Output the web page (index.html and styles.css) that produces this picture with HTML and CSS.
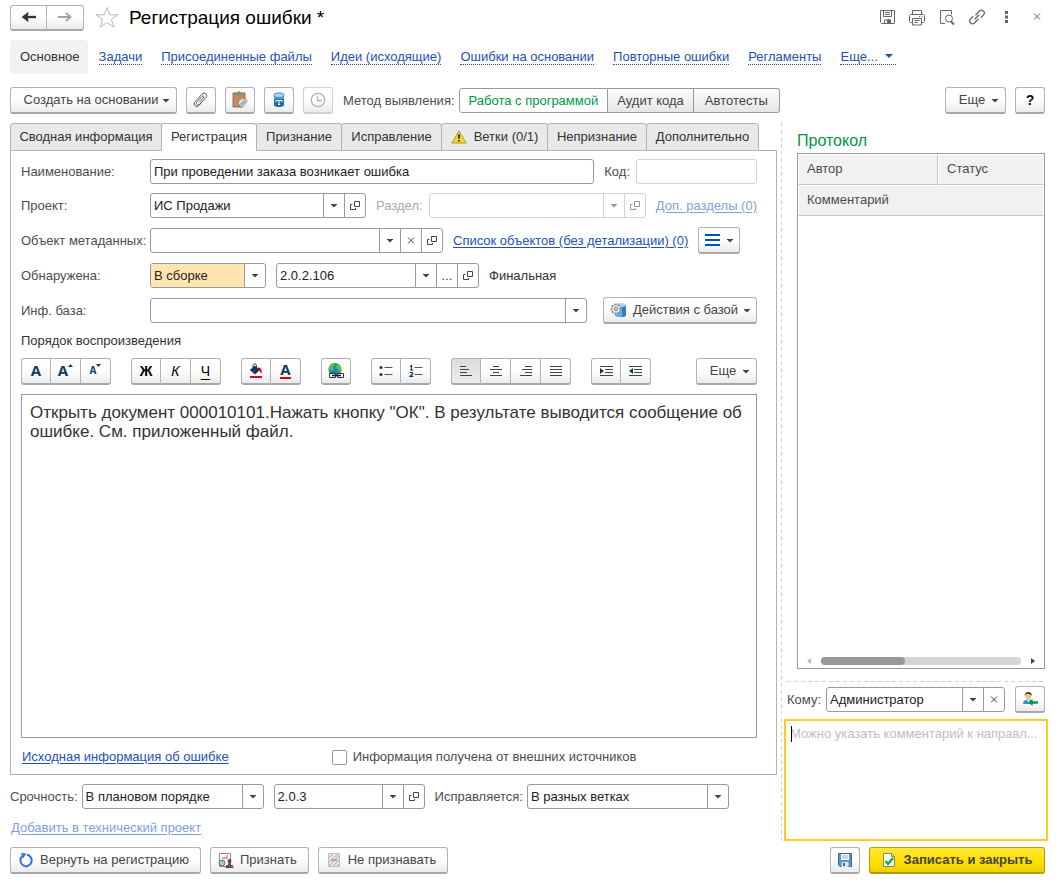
FILE: index.html
```html
<!DOCTYPE html>
<html lang="ru">
<head>
<meta charset="utf-8">
<meta name="viewport" content="width=device-width, initial-scale=1">
<title>Регистрация ошибки *</title>
<link rel="stylesheet" href="styles.css">
</head>
<body>
<svg class="sprite" aria-hidden="true">
  <symbol id="i-open" viewBox="0 0 10 11"><path d="M4.500 1.500h5v5h-5zM2.500 4.500h-2v5h5v-1.500" fill="none" stroke="currentColor"/></symbol>
  <symbol id="i-down" viewBox="0 0 6 5"><path d="M0 1h6v.6L3 4.400 0 1.600z" fill="currentColor"/></symbol>
  <symbol id="i-x" viewBox="0 0 8 9"><path d="M1 1.500l6 6M7 1.500l-6 6" fill="none" stroke="currentColor"/></symbol>
  <symbol id="i-clip" viewBox="0 0 18 18"><path d="M5 8.500l5-5.300c1.500-1.500 3-1.300 4-.4 1 1 1 2.500-.2 3.900l-6 6.500c-1 1-2.200.9-2.900.3-.7-.7-.7-1.700.1-2.700l5-5.300c.6-.6 1.200-.5 1.600-.2.400.4.300.9-.1 1.500L7.300 11.200M5 8.500L3.200 10.500c-1.500 1.700-1.100 3.400-.1 4.300 1 .9 2.700.9 4-.5L9 12.300" fill="none" stroke="currentColor"/></symbol>
</svg>

<div class="window">
  <header class="titlebar">
    <div class="group history">
      <button class="btn" type="button" aria-label="Назад"><svg width="16" height="12" viewBox="0 0 16 12"><path d="M15 6H4" stroke="#333" stroke-width="2.400"/><path d="M1 6l6-4.600v2.600L5 6l2 2v2.600z" fill="#333" stroke="#333" stroke-width=".6"/></svg></button>
      <button class="btn" type="button" aria-label="Вперед"><svg width="16" height="12" viewBox="0 0 16 12"><path d="M1 6h12M9 2l4.500 4L9 10" fill="none" stroke="#a3a3a3" stroke-width="1.800"/></svg></button>
    </div>
    <svg class="star" width="24" height="23" viewBox="0 0 24 23"><path d="M12 1.500l2.800 7.300h8l-6.400 4.700 2.500 7.700L12 16.500l-6.900 4.700 2.500-7.700L1.200 8.800h8z" fill="#fff" stroke="#b5bac2"/></svg>
    <h1>Регистрация ошибки *</h1>
    <div class="tools">
      <button type="button" aria-label="Сохранить"><svg width="18" height="18" viewBox="0 0 18 18" fill="none" stroke="#666"><path d="M2.500 1.500h14v13h-13l-1-1z"/><path d="M5.500 1.500v6h8v-6M7 3.500h5M7 5.500h5"/><path d="M6.500 14v-3h6v3"/><path d="M9.500 11h3v3h-3z" fill="#666"/></svg></button>
      <button type="button" aria-label="Печать"><svg width="18" height="18" viewBox="0 0 18 18" fill="none" stroke="#666"><path d="M4.500 5.500v-4h9v4M4.500 13.500h-2l-1-1v-6l1-1h13l1 1v6l-1 1h-2"/><path d="M4.500 9.500h9v6.500h-9zM6.500 11.500h5M6.500 13.500h3M11 7.500h1M13.500 7.500h1"/></svg></button>
      <button type="button" aria-label="Предпросмотр"><svg width="18" height="18" viewBox="0 0 18 18" fill="none" stroke="#666"><path d="M7 14.500H2.500v-13h11v4"/><circle cx="11" cy="9.500" r="3.500"/><path d="M13 12.500l3 3" stroke-width="2"/></svg></button>
      <button type="button" aria-label="Ссылка"><svg width="18" height="18" viewBox="0 0 18 18" fill="none" stroke="#666" stroke-width="1.300"><path d="M7.500 6.200l3.700-4c1.300-1.300 3-1.300 4.200-.3 1.200 1.100 1.200 2.800 0 4.200l-2.600 2.700M10.500 9.800l-3.700 4c-1.300 1.300-3 1.300-4.200.3-1.200-1.100-1.200-2.800 0-4.200l2.600-2.700M6.800 10.200l4.400-4.600"/></svg></button>
      <button type="button" aria-label="Меню"><svg width="18" height="18" viewBox="0 0 18 18" fill="#666"><path d="M7 2h3v3H7zM7 6.500h3v3H7zM7 11h3v3H7z"/></svg></button>
      <button type="button" aria-label="Закрыть"><svg width="18" height="18" viewBox="0 0 18 18" stroke="#666"><path d="M6 4.500l6 6M12 4.500l-6 6"/></svg></button>
    </div>
  </header>

  <nav class="sections">
    <a class="current" href="#main"><span>Основное</span></a>
    <a href="#tasks"><span>Задачи</span></a>
    <a href="#files"><span>Присоединенные файлы</span></a>
    <a href="#ideas"><span>Идеи (исходящие)</span></a>
    <a href="#based"><span>Ошибки на основании</span></a>
    <a href="#repeat"><span>Повторные ошибки</span></a>
    <a href="#rules"><span>Регламенты</span></a>
    <a href="#more"><span>Еще...<svg class="nav-arrow" width="8" height="4" viewBox="0 0 8 4"><path d="M0 0h8L4 4z" fill="#1e50b5"/></svg></span></a>
  </nav>

  <div class="commands">
    <button class="btn create" type="button">Создать на основании<svg class="arr"><use href="#i-down"/></svg></button>
    <button class="btn square" type="button" aria-label="Файлы"><svg width="18" height="18" color="#555"><use href="#i-clip"/></svg></button>
    <button class="btn square" type="button" aria-label="Вставить файл"><svg width="18" height="18" viewBox="0 0 18 18"><path d="M2 2h12v14H2z" fill="#c08a63" stroke="#a06c48"/><path d="M4 1.500h2.500l.8-1.200h1.500l.8 1.200H12v2.800H4z" fill="#8b8b83"/><circle cx="12.500" cy="12.500" r="4.500" fill="#eee"/><svg x="7" y="7" width="11" height="11" color="#555"><use href="#i-clip"/></svg></svg></button>
    <button class="btn square" type="button" aria-label="База"><svg width="14" height="16" viewBox="0 0 14 16"><path d="M2 3v10c0 2.500 10 2.500 10 0V3z" fill="#4c9ddd"/><path d="M2 7v6c0 2.500 10 2.500 10 0V7z" fill="#216ca9"/><ellipse cx="7" cy="3.200" rx="5" ry="2.200" fill="#a9d4f3" stroke="#3f88c2"/><path d="M4 10V8.500h6V10M7 8.500v4M6 12.500h2" fill="none" stroke="#fff"/></svg></button>
    <button class="btn square faded" type="button" aria-label="История" disabled><svg width="16" height="16" viewBox="0 0 16 16" fill="none" stroke="#b5b5b5"><circle cx="8" cy="8" r="6.700" stroke-width="1.300"/><path d="M7.500 3.500v5H12" stroke-width="1.400"/></svg></button>
    <span class="caption">Метод выявления:</span>
    <div class="switch" role="group" aria-label="Метод выявления">
      <button class="on" type="button">Работа с программой</button>
      <button type="button">Аудит кода</button>
      <button type="button">Автотесты</button>
    </div>
    <div class="right">
      <button class="btn more" type="button">Еще<svg class="arr"><use href="#i-down"/></svg></button>
      <button class="btn square help" type="button">?</button>
    </div>
  </div>

  <main class="content">
    <section class="left">
      <div class="tabs" role="tablist">
        <button class="t-summary" type="button" role="tab">Сводная информация</button>
        <button class="t-reg active" type="button" role="tab" aria-selected="true">Регистрация</button>
        <button class="t-accept" type="button" role="tab">Признание</button>
        <button class="t-fix" type="button" role="tab">Исправление</button>
        <button class="t-branch" type="button" role="tab"><svg width="16" height="14" viewBox="0 0 16 14"><path d="M8 1L15.200 13H.8z" fill="#f1d732" stroke="#b09a2a" stroke-linejoin="round"/><path d="M7 4.500h2L8.600 9H7.400zM7.200 10h1.600v1.600H7.200z" fill="#222"/></svg>Ветки (0/1)</button>
        <button class="t-reject" type="button" role="tab">Непризнание</button>
        <button class="t-extra" type="button" role="tab">Дополнительно</button>
      </div>

      <div class="panel">
        <div class="row">
          <label class="lead" for="name">Наименование:</label>
          <div class="field grow"><input id="name" value="При проведении заказа возникает ошибка"></div>
          <label for="code">Код:</label>
          <div class="field muted code"><input id="code" disabled></div>
        </div>
        <div class="row">
          <label class="lead" for="project">Проект:</label>
          <div class="field w-project"><input id="project" value="ИС Продажи"><button type="button" aria-label="Выбрать"><svg class="arr"><use href="#i-down"/></svg></button><button type="button" aria-label="Открыть"><svg class="open"><use href="#i-open"/></svg></button></div>
          <label class="pale" for="part">Раздел:</label>
          <div class="field muted grow part"><input id="part" disabled><button type="button" aria-label="Выбрать" disabled><svg class="arr"><use href="#i-down"/></svg></button><button type="button" aria-label="Открыть" disabled><svg class="open"><use href="#i-open"/></svg></button></div>
          <a class="link pale-link" href="#parts">Доп. разделы (0)</a>
        </div>
        <div class="row">
          <label class="lead" for="object">Объект метаданных:</label>
          <div class="field w-object"><input id="object"><button type="button" aria-label="Выбрать"><svg class="arr"><use href="#i-down"/></svg></button><button type="button" aria-label="Очистить"><svg class="x"><use href="#i-x"/></svg></button><button type="button" aria-label="Открыть"><svg class="open"><use href="#i-open"/></svg></button></div>
          <a class="link" href="#objects">Список объектов (без детализации) (0)</a>
          <button class="btn list" type="button" aria-label="Список"><svg width="15" height="12" viewBox="0 0 15 12"><path d="M0 1h15M0 6h15M0 11h15" stroke="#0052b4" stroke-width="2"/></svg><svg class="arr"><use href="#i-down"/></svg></button>
        </div>
        <div class="row">
          <label class="lead" for="found">Обнаружена:</label>
          <div class="field warm w-found"><select id="found"><option>В сборке</option></select><span class="cell"><svg class="arr"><use href="#i-down"/></svg></span></div>
          <div class="field w-build"><input aria-label="Номер сборки" value="2.0.2.106"><button type="button" aria-label="Выбрать"><svg class="arr"><use href="#i-down"/></svg></button><button type="button">...</button><button type="button" aria-label="Открыть"><svg class="open"><use href="#i-open"/></svg></button></div>
          <span class="value">Финальная</span>
        </div>
        <div class="row base">
          <label class="lead" for="base">Инф. база:</label>
          <div class="field grow"><input id="base"><button type="button" aria-label="Выбрать"><svg class="arr"><use href="#i-down"/></svg></button></div>
          <button class="btn base-actions" type="button"><svg width="17" height="17" viewBox="0 0 17 17"><path d="M5 3v10c0 3 11 3 11 0V3z" fill="#5fb0e4"/><path d="M12 3h4v10c0 1-2 2-4 2z" fill="#2f7fbd"/><ellipse cx="10.500" cy="3" rx="5.500" ry="2" fill="#a8d8f3"/><circle cx="6" cy="7" r="4.500" fill="#d5d8da" stroke="#888" stroke-dasharray="2 1.200" stroke-width="1.800"/><circle cx="6" cy="7" r="3.600" fill="#dfe2e4"/><circle cx="6" cy="7" r="1.500" fill="#fff" stroke="#777"/></svg>Действия с базой<svg class="arr"><use href="#i-down"/></svg></button>
        </div>

        <label class="value" for="steps">Порядок воспроизведения</label>

        <div class="format">
          <div class="group">
            <button class="btn letter" type="button">A</button>
            <button class="btn letter" type="button" aria-label="Крупнее"><span>A</span><svg class="raise" width="5" height="3" viewBox="0 0 5 3"><path d="M0 3h5L2.500 0z" fill="#113b5c"/></svg></button>
            <button class="btn letter tiny" type="button" aria-label="Мельче"><span>A</span><svg class="raise" width="5" height="3" viewBox="0 0 5 3"><path d="M0 0h5L2.500 3z" fill="#113b5c"/></svg></button>
          </div>
          <div class="group">
            <button class="btn glyph bold" type="button">Ж</button>
            <button class="btn glyph italic" type="button">К</button>
            <button class="btn glyph under" type="button">Ч</button>
          </div>
          <div class="group">
            <button class="btn" type="button" aria-label="Цвет фона"><svg width="14" height="16" viewBox="0 0 14 16"><path d="M6 2.500l5 4.500-5 4.500L.8 7z" fill="#113b5c"/><path d="M4 6V2.500C4 .5 7.500.5 7.500 2.500V5" fill="none" stroke="#113b5c"/><path d="M9 4.500c3-.2 4.200 2 3.500 6-2-1-1-3-3.500-4.500z" fill="#d9001b"/><path d="M1 13h12v2H1z" fill="#d9001b"/></svg></button>
            <button class="btn letter" type="button" aria-label="Цвет текста"><span class="ink">A</span></button>
          </div>
          <div class="group">
            <button class="btn" type="button" aria-label="Гиперссылка"><svg width="18" height="18" viewBox="0 0 18 18"><circle cx="8" cy="7.500" r="6.500" fill="#1682cc"/><path d="M3 3c3-3 6-2 5 0L6 5l1 2-2 2-2-1-1.500-1zM10 2l4 3 .5 4-3 1-1-3-2-1z" fill="#56c43c"/><path d="M2.500 11.500h6v4h-6zM10.500 11.500h6v4h-6z" fill="#fff" stroke="#333"/><path d="M5 13.500h9" stroke="#222" stroke-width="1.600"/></svg></button>
          </div>
          <div class="group">
            <button class="btn" type="button" aria-label="Маркированный список"><svg width="14" height="12" viewBox="0 0 14 12"><circle cx="2" cy="2.500" r="1.600" fill="#113b5c"/><circle cx="2" cy="9.500" r="1.600" fill="#113b5c"/><path d="M5.500 2.500h8M5.500 9.500h8" stroke="#555"/></svg></button>
            <button class="btn" type="button" aria-label="Нумерованный список"><svg width="14" height="12" viewBox="0 0 14 12"><path d="M1 1.500l1.500-1V5M.8 5h3.400M1 7.500h2.500v1.500L1 11.300h3.200" fill="none" stroke="#113b5c" stroke-width="1.200"/><path d="M5.500 2.500h8M5.500 9.500h8" stroke="#555"/></svg></button>
          </div>
          <div class="group">
            <button class="btn pressed" type="button" aria-label="По левому краю"><svg width="12" height="12" viewBox="0 0 12 12"><path d="M0 1.500h6M0 4.500h9M0 7.500h7M0 10.500h12" stroke="#444"/></svg></button>
            <button class="btn" type="button" aria-label="По центру"><svg width="12" height="12" viewBox="0 0 12 12"><path d="M3 1.500h6M0 4.500h12M3 7.500h6M0 10.500h12" stroke="#444"/></svg></button>
            <button class="btn" type="button" aria-label="По правому краю"><svg width="12" height="12" viewBox="0 0 12 12"><path d="M5 1.500h7M2 4.500h10M5 7.500h7M0 10.500h12" stroke="#444"/></svg></button>
            <button class="btn" type="button" aria-label="По ширине"><svg width="12" height="12" viewBox="0 0 12 12"><path d="M0 1.500h12M0 4.500h12M0 7.500h12M0 10.500h12" stroke="#444"/></svg></button>
          </div>
          <div class="group">
            <button class="btn" type="button" aria-label="Увеличить отступ"><svg width="13" height="12" viewBox="0 0 13 12"><path d="M0 1.500h13M5 4.500h8M5 7.500h8M0 10.500h13" stroke="#444"/><path d="M0 3l4 3-4 3z" fill="#113b5c"/></svg></button>
            <button class="btn" type="button" aria-label="Уменьшить отступ"><svg width="13" height="12" viewBox="0 0 13 12"><path d="M0 1.500h13M5 4.500h8M5 7.500h8M0 10.500h13" stroke="#444"/><path d="M4 3L0 6l4 3z" fill="#113b5c"/></svg></button>
          </div>
          <button class="btn more right" type="button">Еще<svg class="arr"><use href="#i-down"/></svg></button>
        </div>

        <textarea id="steps" class="editor">Открыть документ 000010101.Нажать кнопку "ОК". В результате выводится сообщение об ошибке. См. приложенный файл.</textarea>

        <div class="sources">
          <a class="link" href="#source">Исходная информация об ошибке</a>
          <label class="check"><input type="checkbox">Информация получена от внешних источников</label>
        </div>
      </div>

      <div class="row urgency">
        <label for="urgency">Срочность:</label>
        <div class="field w-urgency"><select id="urgency"><option>В плановом порядке</option></select><span class="cell"><svg class="arr"><use href="#i-down"/></svg></span></div>
        <div class="field w-version"><input aria-label="Версия" value="2.0.3"><button type="button" aria-label="Выбрать"><svg class="arr"><use href="#i-down"/></svg></button><button type="button" aria-label="Открыть"><svg class="open"><use href="#i-open"/></svg></button></div>
        <label for="branch">Исправляется:</label>
        <div class="field w-branch"><select id="branch"><option>В разных ветках</option></select><span class="cell"><svg class="arr"><use href="#i-down"/></svg></span></div>
      </div>
      <div class="tech"><a class="link pale-link" href="#tech">Добавить в технический проект</a></div>
    </section>

    <aside class="side">
      <section class="log">
        <h2>Протокол</h2>
        <div class="log-box">
          <table>
            <thead>
              <tr><th class="author" scope="col">Автор</th><th scope="col">Статус</th></tr>
              <tr><th colspan="2" scope="col">Комментарий</th></tr>
            </thead>
          </table>
          <div class="scroll">
            <svg width="4" height="6" viewBox="0 0 4 6"><path d="M4 0v6L0 3z" fill="#bbb"/></svg>
            <div class="track"><div class="thumb"></div></div>
            <svg width="4" height="6" viewBox="0 0 4 6"><path d="M0 0v6l4-3z" fill="#444"/></svg>
          </div>
        </div>
      </section>
      <div class="row whom">
        <label for="whom">Кому:</label>
        <div class="field grow"><input id="whom" value="Администратор"><button type="button" aria-label="Выбрать"><svg class="arr"><use href="#i-down"/></svg></button><button type="button" aria-label="Очистить"><svg class="x"><use href="#i-x"/></svg></button></div>
        <button class="btn square" type="button" aria-label="Направить"><svg width="16" height="16" viewBox="0 0 16 16"><path d="M1 13c0-3 2-4 4-4.500h3.500c2 .5 3 1.500 3 4.500z" fill="#3b92c7"/><path d="M5 8.500l1.500 3L8 8.500z" fill="#fff"/><ellipse cx="6.300" cy="5" rx="3" ry="3.800" fill="#f1c58a"/><path d="M2.800 5C2.200 0 10.300-.5 9.900 5 9 3 7 3 5.500 2.800 4 3 3.500 4 2.800 5z" fill="#4a3422"/><path d="M6.500 11.500l4-3.500v2.200H16v2.600h-5.500V15z" fill="#0a9c4a"/></svg></button>
      </div>
      <div class="note">
        <textarea aria-label="Комментарий" placeholder="Можно указать комментарий к направл..."></textarea>
        <span class="caret"></span>
      </div>
    </aside>
  </main>

  <footer class="actions">
    <button class="btn" type="button"><svg width="16" height="16" viewBox="0 0 16 16"><path d="M4.500 4A5.700 5.700 0 1 0 9 2.800" fill="none" stroke="#2f74d8" stroke-width="2"/><path d="M3 1l5.500.5-3.500 5z" fill="#2f74d8"/></svg>Вернуть на регистрацию</button>
    <button class="btn" type="button"><svg width="16" height="16" viewBox="0 0 16 16"><path d="M1.500 1.500h11v13h-11z" fill="#fff" stroke="#7d8a94"/><path d="M4 6h6M8 4h2" stroke="#e33"/><circle cx="4" cy="11" r="3" fill="#a6c6d6" stroke="#54788c"/><circle cx="11.500" cy="9" r="2" fill="#7b432b"/><path d="M10.500 10h2l.5 3h2v1.500H8V13h2z" fill="#7b432b"/><path d="M7.500 15.300h8" stroke="#222"/></svg>Признать</button>
    <button class="btn" type="button"><svg width="16" height="16" viewBox="0 0 16 16"><path d="M2.500 1.500h11v13h-11z" fill="#f0f2f3" stroke="#b8bec2"/><path d="M3 6l4-4M3 10l9-8M3 14l10-10M7 14l6-6M11 14l2-2" stroke="#b5bbc0" stroke-width="1.300"/><path d="M5 8h6" stroke="#f25555"/></svg>Не признавать</button>
    <div class="right">
      <button class="btn square" type="button" aria-label="Записать"><svg width="14" height="14" viewBox="0 0 14 14"><path d="M.5.500h13v13H2l-1.500-1.500z" fill="#5b93c7" stroke="#3b6791"/><path d="M3 1h8v6H3z" fill="#fff"/><path d="M4 3h6M4 5h6" stroke="#91aabf"/><path d="M3.500 9h7v5h-7z" fill="#dce4e9"/><path d="M5 10h2v3H5z" fill="#3b6791"/></svg></button>
      <button class="btn primary" type="button"><svg width="14" height="16" viewBox="0 0 14 16"><path d="M1.500 1.500h8l3 3v10h-11z" fill="#fff" stroke="#7c8d5c"/><path d="M9.500 1.500v3h3" fill="none" stroke="#7c8d5c"/><path d="M3.500 9l2.500 3 5-6" fill="none" stroke="#25a536" stroke-width="2.400"/></svg>Записать и закрыть</button>
    </div>
  </footer>
</div>
</body>
</html>
```

FILE: styles.css
```css
* { box-sizing: border-box; }

body {
  margin: 0;
  background: #fff;
  color: #4d4d4d;
  font: 13px/16px "Liberation Sans", Arial, sans-serif;
}

button, input, select, textarea {
  margin: 0;
  font: inherit;
  color: inherit;
}

button { cursor: pointer; }
svg { display: block; flex: none; }
.sprite { position: absolute; width: 0; height: 0; }

.window {
  display: flex;
  flex-direction: column;
  min-height: 100vh;
  padding: 4px 19px 9px 10px;
}

.right { display: flex; gap: 9px; margin-left: auto; }
.arr { width: 6px; height: 5px; }
.btn .arr { margin-top: 1px; }
.open { width: 10px; height: 11px; }
.x { width: 8px; height: 9px; }

/* Buttons */
.btn {
  display: flex;
  align-items: center;
  justify-content: center;
  height: 27px;
  padding: 0 12px;
  border: 1px solid #b3b3b3;
  border-bottom: 2px solid #a8a8a8;
  border-radius: 3px;
  background: linear-gradient(#fff 45%, #ebebeb);
  color: #444;
  white-space: nowrap;
}
.btn.square { width: 30px; padding: 0; }
.btn.faded { border-color: #d0d0d0; }
.btn.more { width: 61px; padding: 0 0 0 6px; gap: 7px; }
.btn.help { color: #111; font-size: 14px; font-weight: bold; }
.group { display: flex; }
.group .btn { width: 30px; padding: 0; }
.group .btn + .btn { border-left: 0; }
.group .btn:not(:first-child) { border-top-left-radius: 0; border-bottom-left-radius: 0; }
.group .btn:not(:last-child) { border-top-right-radius: 0; border-bottom-right-radius: 0; }

/* Title bar */
.titlebar { display: flex; align-items: center; height: 27px; }
.history .btn { width: 37px; height: 26px; }
.star { margin: 0 10px 0 11px; }
h1 { margin: 0; color: #000; font-size: 19px; font-weight: normal; line-height: 24px; }
.tools { display: flex; gap: 12px; margin: 0 -1px 0 auto; }
.tools button { padding: 0; border: 0; background: none; }

/* Sections */
.sections { display: flex; gap: 19px; margin-top: 9px; line-height: 34px; white-space: nowrap; }
.sections a { color: #1e50b5; text-decoration: none; }
.sections a span { border-bottom: 1px dotted #1e50b5; }
.sections .current { margin-right: -8px; padding: 0 8px 0 10px; border-radius: 4px; background: #f2f2f2; color: #333; }
.sections .current span { border: 0; }
.nav-arrow { display: inline-block; margin: 0 3px 3px 7px; }

/* Command bar */
.commands { display: flex; align-items: center; gap: 9px; margin-top: 13px; }
.create { width: 167px; padding: 0 0 0 6px; gap: 5px; }
.caption { margin: 0 -5px 0 1px; }
.switch { display: flex; }
.switch button {
  height: 25px;
  padding: 0 9px;
  border: 1px solid #999;
  border-left: 0;
  background: linear-gradient(#fcfcfc, #e6e6e6);
  color: #444;
}
.switch button:first-child { border-left: 1px solid #999; border-radius: 3px 0 0 3px; }
.switch button:last-child { padding: 0 11px; border-radius: 0 3px 3px 0; }
.switch .on { background: #fff; color: #009646; }

/* Columns */
.content { display: grid; grid-template-columns: 1fr 267px; gap: 4px; flex: 1; margin: 9px -3px 0 0; }
.left { display: flex; flex-direction: column; min-width: 0; }

.tabs { display: flex; margin-bottom: -1px; z-index: 1; }
.tabs button {
  display: flex;
  align-items: center;
  justify-content: center;
  gap: 7px;
  height: 28px;
  margin-right: -1px;
  padding: 0;
  border: 1px solid #b3b3b3;
  border-radius: 3px 3px 0 0;
  background: #e9e9e9;
  color: #333;
  white-space: nowrap;
}
.tabs .active { border-bottom-color: #fff; background: #fff; }
.t-summary { width: 152px; }
.t-reg { width: 96px; }
.t-accept { width: 86px; }
.t-fix { width: 101px; }
.t-branch { width: 107px; }
.t-reject { width: 100px; }
.t-extra { width: 113px; }

.panel {
  display: flex;
  flex: 1;
  flex-direction: column;
  gap: 9px;
  padding: 8px 19px 7px 10px;
  border: 1px solid #b3b3b3;
}

/* Form rows */
.row { display: flex; align-items: center; gap: 10px; white-space: nowrap; }
.row .lead { width: 129px; margin-right: -10px; }
.row.base { gap: 16px; }
.row.base .lead { margin-right: -16px; }
.grow { flex: 1; }
.value { color: #333; }
.pale { color: #aaa; }
.code { width: 121px; margin-left: -4px; }
.part { margin-left: -4px; }
.w-project { width: 216px; }
.w-object { width: 293px; }
.w-found { width: 116px; }
.w-build { width: 203px; }
.w-urgency { width: 182px; }
.w-version { width: 151px; }
.w-branch { width: 202px; }

.field {
  display: flex;
  height: 25px;
  min-width: 0;
  border: 1px solid #999;
  border-radius: 3px;
  background: #fff;
  color: #222;
  overflow: hidden;
}
.field input, .field select {
  flex: 1;
  width: 0;
  min-width: 0;
  padding: 0 3px;
  border: 0;
  outline: 0;
  background: none;
  appearance: none;
}
.field button, .field .cell {
  display: flex;
  align-items: center;
  justify-content: center;
  width: 21px;
  padding: 0;
  border: 0;
  border-left: 1px solid #999;
  background: none;
  color: #444;
}
.field.muted, .field.muted button { border-color: #d2d2d2; color: #999; }
.field.warm select { background: #ffe6b0; }

.link { color: #1e50b5; text-underline-offset: 2px; }
.pale-link { color: #7f9fdb; }
.btn.list { width: 42px; padding: 0; gap: 7px; }
.base-actions { width: 154px; padding: 0; gap: 6px; }

/* Formatting bar */
.format { display: flex; gap: 20px; }
.letter { padding: 0; color: #113b5c; font: bold 15px/16px "Open Sans", "Liberation Sans", sans-serif; }
.group .btn.letter { padding-bottom: 2px; }
.letter.tiny { font-size: 10px; }
.letter .raise { align-self: flex-start; margin-top: 5px; }
.ink { border-bottom: 2px solid #d9001b; line-height: 15px; }
.glyph { color: #000; font-size: 14px; }
.bold { font-weight: bold; }
.italic { font-style: italic; }
.under { text-decoration: underline; text-underline-offset: 3px; }
.btn.pressed { background: linear-gradient(#dcdcdc, #ececec); }

.editor {
  flex: 1;
  width: 100%;
  min-height: 120px;
  padding: 8px;
  border: 1px solid #999;
  outline: 0;
  color: #333;
  font-size: 17px;
  line-height: 19px;
  resize: none;
}

.sources { display: flex; align-items: center; gap: 103px; height: 20px; padding-left: 1px; }
.check { display: flex; align-items: center; gap: 6px; }
.check input { width: 15px; height: 15px; border: 1px solid #999; border-radius: 2px; background: #fff; appearance: none; }
.check input:checked { background: #009646; }

.urgency { margin-top: 9px; }
.urgency label { margin-right: -6px; }
.tech { margin-top: 11px; padding: 0 0 5px 1px; }

/* Side column */
.side {
  display: flex;
  flex-direction: column;
  padding: 8px 0 0 3px;
  background: repeating-linear-gradient(#d2d2d2 0 4px, transparent 4px 7px) 0 0 / 1px 100% no-repeat;
}
.log { display: flex; flex: 1; flex-direction: column; margin: 0 3px 0 13px; }
h2 { margin: 0 0 2px; color: #009646; font-size: 16px; font-weight: normal; line-height: 20px; }
.log-box { display: flex; flex: 1; flex-direction: column; border: 1px solid #999; }
table { width: 100%; border-collapse: separate; border-spacing: 0; }
th { height: 31px; padding: 0 8px 2px; border: 1px solid #fff; border-bottom-color: #c6c6c6; background: #f1f1f1; font-weight: normal; text-align: left; }
th.author { width: 140px; border-right-color: #c6c6c6; }
.scroll { display: flex; align-items: center; gap: 10px; margin-top: auto; padding: 0 9px 3px; }
.track { flex: 1; height: 8px; border-radius: 4px; background: #d5d5d5; }
.thumb { width: 42%; height: 8px; border-radius: 4px; background: #999; }
.whom {
  margin: 12px 3px 0;
  padding-top: 5px;
  gap: 5px;
  background: repeating-linear-gradient(90deg, #d2d2d2 0 4px, transparent 4px 7px) 0 0 / 100% 1px no-repeat;
}
.whom .btn { margin-left: 5px; }
.note { position: relative; margin-top: 6px; }
.note textarea {
  display: block;
  width: 100%;
  height: 122px;
  padding: 5px 4px;
  border: 2px solid #fccb1e;
  outline: 0;
  overflow: hidden;
  resize: none;
  white-space: nowrap;
}
.note textarea::placeholder { color: #bdbdbd; }
.caret { position: absolute; top: 7px; left: 7px; width: 1px; height: 16px; background: #000; }

/* Footer */
.actions { display: flex; gap: 9px; margin-top: 6px; }
.actions > .btn { gap: 6px; padding: 0 11px 0 7px; }
.btn.primary {
  gap: 8px;
  width: 176px;
  padding: 0;
  border-color: #b39b00;
  background: linear-gradient(#ffe93a, #ffe100 50%, #efd000);
  font-weight: bold;
}
```
